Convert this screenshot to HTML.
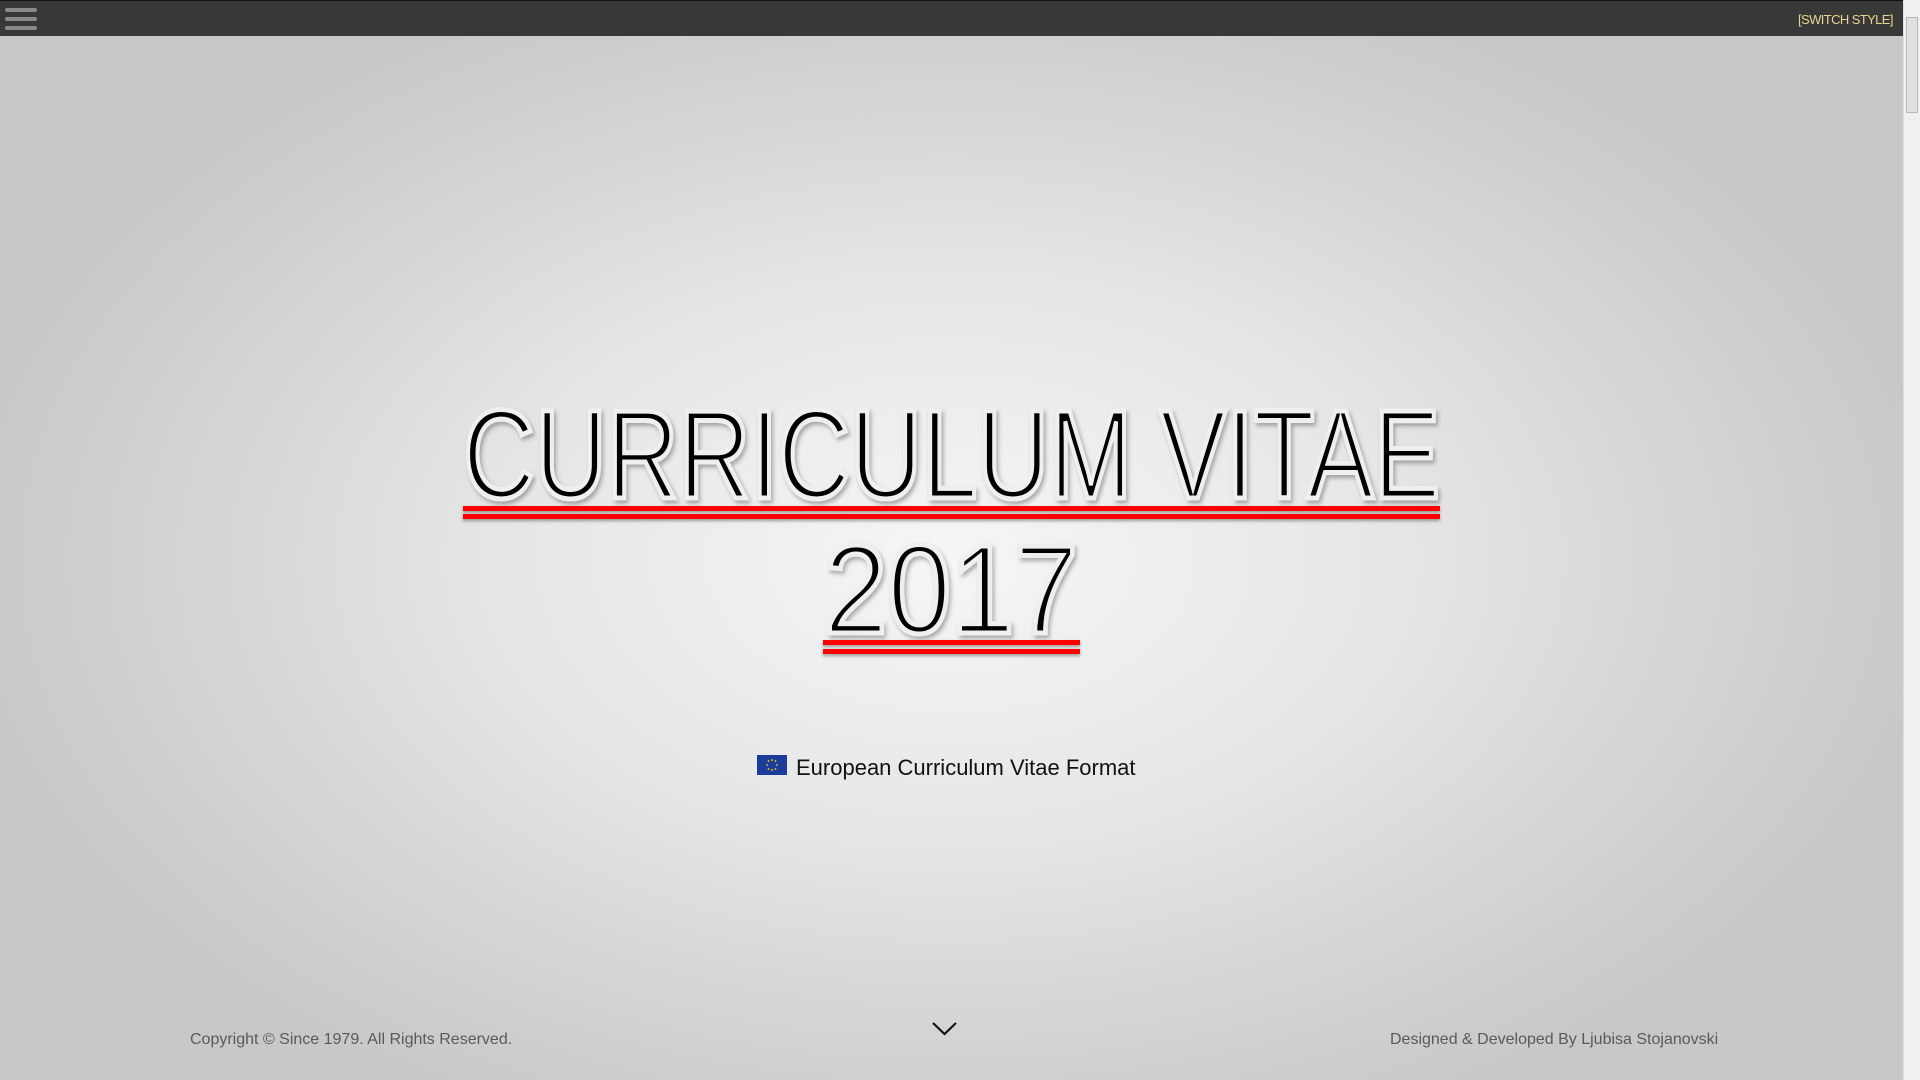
<!DOCTYPE html>
<html><head><meta charset="utf-8">
<style>
html,body{margin:0;padding:0;width:1920px;height:1080px;overflow:hidden;font-family:"Liberation Sans",sans-serif;}
body{position:relative;background:radial-gradient(ellipse 1000px 620px at 950px 560px,#f6f6f6 0%,#e6e6e6 45%,#cfcfcf 85%,#c8c8c8 100%);}
.top{position:absolute;left:0;top:0;width:1903px;height:36px;background:#383838;border-top:1px solid #111;box-sizing:border-box;}
.bar{position:absolute;left:5px;width:32px;height:4px;background:#8a8a8a;border-radius:2px;}
.sw{position:absolute;left:1798px;top:11px;font-size:13px;white-space:nowrap;letter-spacing:-0.6px;color:#e6d690;}
.scroll{position:absolute;right:0;top:0;width:17px;height:1080px;background:#f0f0f0;border-left:1px solid #ddd;box-sizing:border-box;}
.thumb{position:absolute;left:2px;top:17px;width:12px;height:96px;background:#e0e0e0;border:1px solid #b8b8b8;box-sizing:border-box;}
.red{position:absolute;background:#f00;box-shadow:0 2px 3px rgba(0,0,0,.35);}
.eu{position:absolute;left:757px;top:755px;width:30px;height:20px;background:#1b3c9a;}
.sub{position:absolute;left:796px;top:755px;font-size:22px;color:#111;white-space:nowrap;}
.foot{position:absolute;top:1031px;font-size:16px;color:#5a5a5a;white-space:nowrap;}
</style></head><body>
<div class="top">
<div class="bar" style="top:7px"></div><div class="bar" style="top:16px"></div><div class="bar" style="top:25px"></div>
<div class="sw">[SWITCH STYLE]</div>
</div>
<div class="scroll"><div class="thumb"></div></div>
<svg width="1903" height="700" style="position:absolute;left:0;top:0" >
<defs><filter id="sh" x="-5%" y="-5%" width="110%" height="120%"><feDropShadow dx="2" dy="3" stdDeviation="2" flood-opacity="0.3"/></filter></defs>
<g filter="url(#sh)">
<text x="463" y="498" font-family="Liberation Sans" font-size="126" textLength="977" lengthAdjust="spacingAndGlyphs" fill="#000" stroke="#efefef" stroke-width="5">CURRICULUM VITAE</text>
<text x="824" y="633" font-family="Liberation Sans" font-size="126" textLength="254" lengthAdjust="spacingAndGlyphs" fill="#000" stroke="#efefef" stroke-width="5">2017</text>
</g>
</svg>
<div class="red" style="left:463px;top:506px;width:977px;height:5px"></div>
<div class="red" style="left:463px;top:514px;width:977px;height:5px"></div>
<div class="red" style="left:823px;top:640px;width:257px;height:5px"></div>
<div class="red" style="left:823px;top:649px;width:257px;height:5px"></div>
<div class="eu"><svg width="30" height="20"><g fill="#ffd700">
<circle cx="15" cy="5" r="0.9"/><circle cx="18.5" cy="6" r="0.9"/><circle cx="20" cy="10" r="0.9"/><circle cx="18.5" cy="14" r="0.9"/><circle cx="15" cy="15" r="0.9"/><circle cx="11.5" cy="14" r="0.9"/><circle cx="10" cy="10" r="0.9"/><circle cx="11.5" cy="6" r="0.9"/></g></svg></div>
<div class="sub">European Curriculum Vitae Format</div>
<svg style="position:absolute;left:931px;top:1021px" width="27" height="16"><path d="M2 2 L13.5 13 L25 2" fill="none" stroke="#111" stroke-width="2.2"/></svg>
<div class="foot" style="left:190px">Copyright © Since 1979. All Rights Reserved.</div>
<div class="foot" style="left:1390px">Designed &amp; Developed By Ljubisa Stojanovski</div>
</body></html>
